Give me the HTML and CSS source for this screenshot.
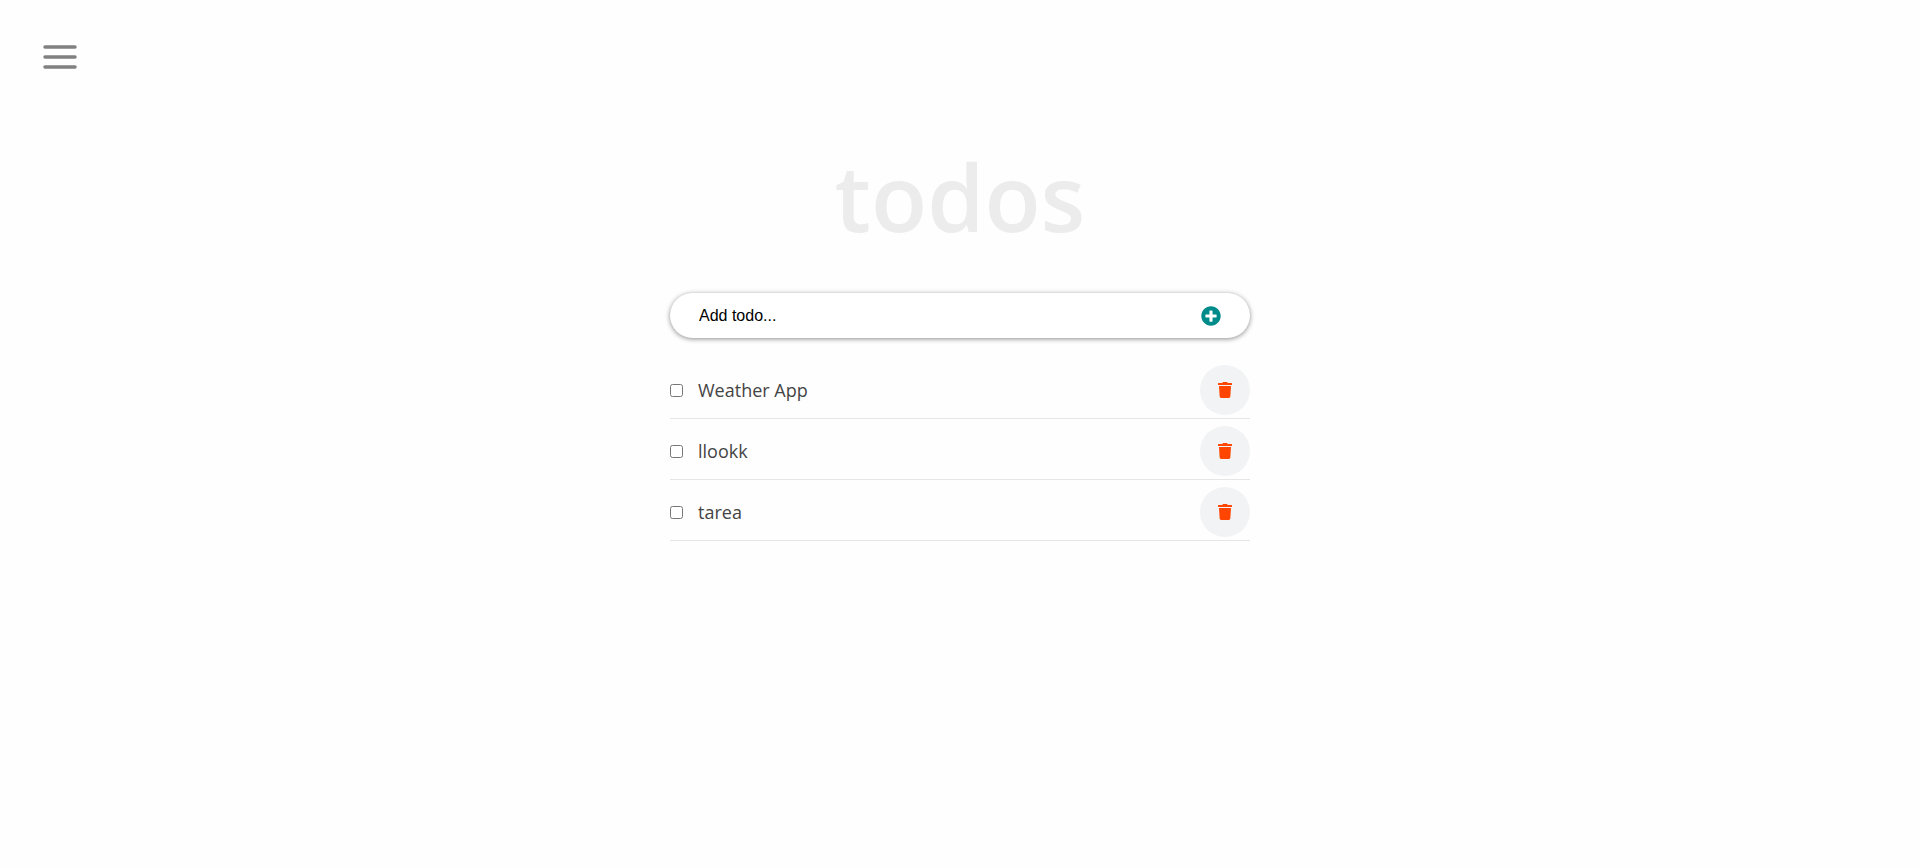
FILE: index.html
```
<!DOCTYPE html>
<html lang="en">
<head>
  <meta charset="utf-8">
  <meta name="viewport" content="width=device-width, initial-scale=1">
  <title>todos</title>
  <link rel="stylesheet" href="styles.css">
</head>
<body>
  <svg width="0" height="0" class="sprite" aria-hidden="true">
    <symbol id="trash" viewBox="0 0 448 512"><path d="M432 32H312l-9.400-18.700A24 24 0 0 0 281.100 0H166.800a23.720 23.720 0 0 0-21.400 13.300L136 32H16A16 16 0 0 0 0 48v32a16 16 0 0 0 16 16h416a16 16 0 0 0 16-16V48a16 16 0 0 0-16-16zM53.200 467a48 48 0 0 0 47.900 45h245.800a48 48 0 0 0 47.900-45L416 128H32z"/></symbol>
  </svg>
  <nav class="navbar">
    <button class="menu-button" type="button" aria-label="Open menu">
      <svg class="menu-icon" viewBox="0 0 40 40"><path d="M5 10h30M5 20h30M5 30h30"/></svg>
    </button>
  </nav>
  <main class="container">
    <h1 class="title">todos</h1>
    <form class="add-form">
      <input class="add-input" type="text" placeholder="Add todo..." aria-label="Add todo">
      <button class="add-button" type="button" aria-label="Add">
        <svg class="add-icon" viewBox="0 0 512 512"><path d="M256 8C119 8 8 119 8 256s111 248 248 248 248-111 248-248S393 8 256 8zm144 276c0 6.600-5.400 12-12 12h-92v92c0 6.600-5.400 12-12 12h-56c-6.600 0-12-5.400-12-12v-92h-92c-6.600 0-12-5.400-12-12v-56c0-6.600 5.400-12 12-12h92v-92c0-6.600 5.400-12 12-12h56c6.600 0 12 5.400 12 12v92h92c6.600 0 12 5.400 12 12v56z"/></svg>
      </button>
    </form>
    <ul class="list">
      <li class="item">
        <label class="item-label"><input class="check" type="checkbox">Weather App</label>
        <button class="delete-button" type="button" aria-label="Delete Weather App"><svg class="trash-icon"><use href="#trash"/></svg></button>
      </li>
      <li class="item">
        <label class="item-label"><input class="check" type="checkbox">llookk</label>
        <button class="delete-button" type="button" aria-label="Delete llookk"><svg class="trash-icon"><use href="#trash"/></svg></button>
      </li>
      <li class="item">
        <label class="item-label"><input class="check" type="checkbox">tarea</label>
        <button class="delete-button" type="button" aria-label="Delete tarea"><svg class="trash-icon"><use href="#trash"/></svg></button>
      </li>
    </ul>
  </main>
</body>
</html>
```
FILE: styles.css
```
* {
  box-sizing: border-box;
}

body {
  margin: 0;
  background: #fefefe;
  color: #444;
  font-family: "Segoe UI", "Open Sans", "Noto Sans", sans-serif;
}

.sprite {
  position: absolute;
}

.navbar {
  padding: 37px 40px 0;
}

.menu-button,
.add-button {
  display: block;
  border: 0;
  padding: 0;
  background: none;
  cursor: pointer;
}

.menu-icon {
  display: block;
  width: 40px;
  height: 40px;
  fill: none;
  stroke: #808080;
  stroke-width: 3.500;
  stroke-linecap: round;
}

.container {
  max-width: 620px;
  margin: 0 auto;
  padding: 56px 20px 0;
}

.title {
  margin: 0 0 32px;
  color: #ececec;
  font-size: 92px;
  font-weight: 600;
  line-height: 128px;
  text-align: center;
}

.add-form {
  display: flex;
  align-items: center;
  height: 45px;
  margin-bottom: 20px;
  padding: 0 29px;
  border-radius: 24px;
  background: #fff;
  box-shadow: 0 1px 5px rgba(0, 0, 0, 0.45);
}

.add-input {
  flex: 1;
  min-width: 0;
  border: 0;
  padding: 0;
  outline: 0;
  background: none;
  font: 16px "Liberation Sans", Arial, sans-serif;
}

.add-input::placeholder {
  color: #000;
}

.add-icon {
  display: block;
  width: 20px;
  height: 20px;
  fill: #008b8b;
}

.list {
  margin: 0;
  padding: 0;
  list-style: none;
}

.item {
  display: flex;
  align-items: center;
  justify-content: space-between;
  padding: 7px 0 3px;
  border-bottom: 1px solid #e6e6e6;
}

.item-label {
  display: flex;
  align-items: center;
  gap: 15px;
  font-size: 18px;
}

.check {
  width: 13px;
  height: 13px;
  margin: 0;
}

.delete-button {
  display: flex;
  align-items: center;
  justify-content: center;
  width: 50px;
  height: 50px;
  border: 0;
  border-radius: 50%;
  padding: 0;
  background: #f1f3f4;
  cursor: pointer;
}

.trash-icon {
  width: 14px;
  height: 16px;
  fill: #ff4500;
}
```
